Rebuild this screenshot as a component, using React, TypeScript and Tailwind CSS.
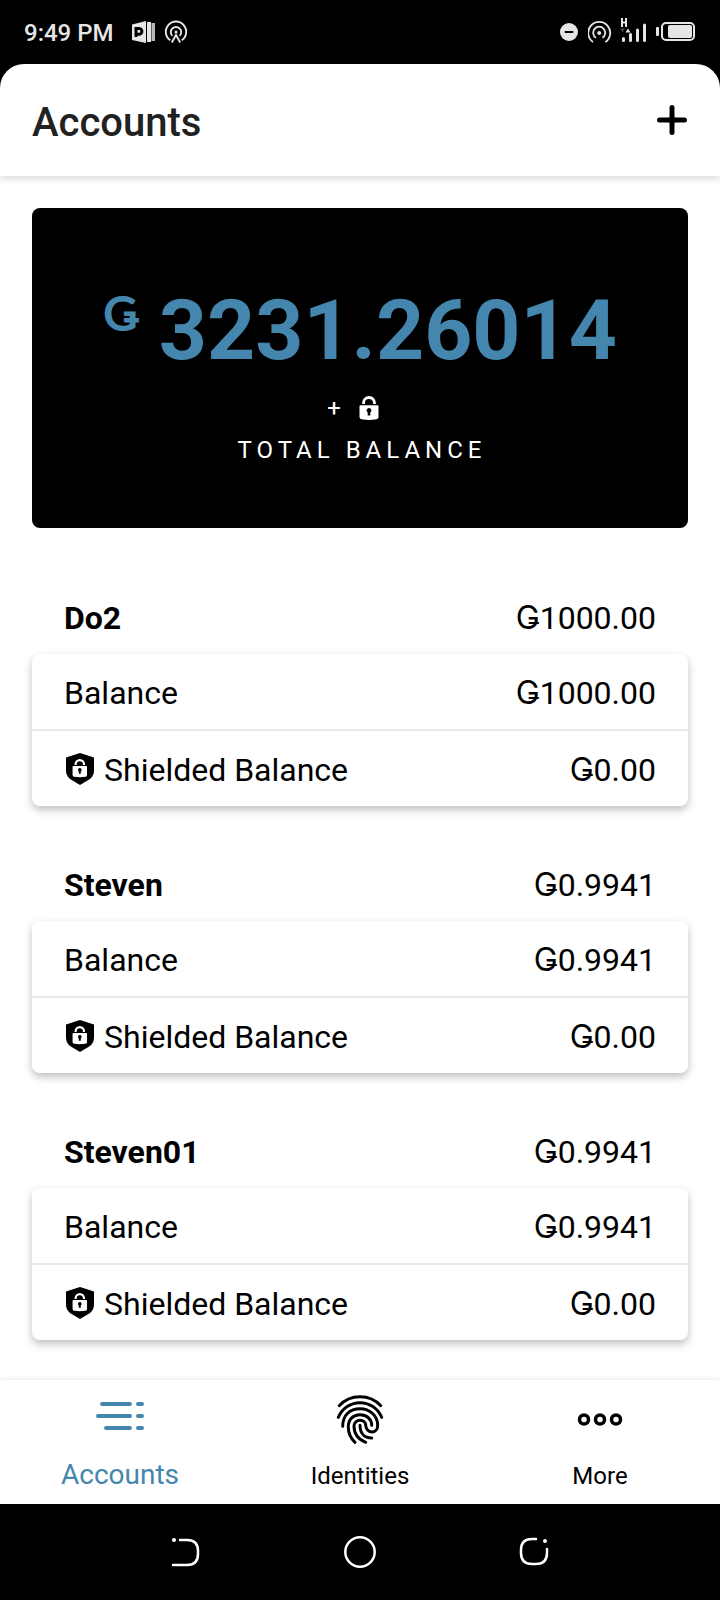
import React from "react";

type Account = { name: string; total: string; balance: string; shielded: string };

const accounts: Account[] = [
  { name: "Do2", total: "Ǥ1000.00", balance: "Ǥ1000.00", shielded: "Ǥ0.00" },
  { name: "Steven", total: "Ǥ0.9941", balance: "Ǥ0.9941", shielded: "Ǥ0.00" },
  { name: "Steven01", total: "Ǥ0.9941", balance: "Ǥ0.9941", shielded: "Ǥ0.00" },
];

function StatusBar() {
  return (
    <div className="flex h-16 items-center justify-between bg-black px-6 text-[#e6e6e6]">
      <div className="flex items-center gap-2">
        <span className="mr-2.5 pt-0.5 text-2xl font-medium">9:49 PM</span>
        <svg className="h-6 w-6" viewBox="0 0 24 24" fill="currentColor" aria-hidden="true">
          <path d="M0 4.500L14 1v22L0 20z" />
          <path d="M15 2h4v20h-4z" />
          <path d="M19.500 3h3.500v18h-3.500z" opacity=".8" />
          <path d="M4 17V8.500h3a2.900 2.900 0 0 1 0 5.800H4" fill="none" stroke="black" strokeWidth="3" />
        </svg>
        <svg className="h-6 w-6" viewBox="0 0 24 24" fill="none" stroke="currentColor" strokeWidth="1.900" aria-hidden="true">
          <path d="M6.300 20.200a10.200 10.200 0 1 1 11.400 0M8.300 15.800a5.200 5.200 0 1 1 7.400 0M7.800 22.500l4.200-7.500 4.200 7.500" />
          <circle cx="12" cy="12" r="1.500" fill="currentColor" stroke="none" />
        </svg>
      </div>
      <div className="flex items-center gap-2">
        <svg className="h-5 w-5" viewBox="0 0 20 20" aria-hidden="true">
          <circle cx="9" cy="10" r="9" fill="currentColor" />
          <path d="M5.500 10h7" stroke="black" strokeWidth="2" strokeLinecap="round" />
        </svg>
        <svg className="h-6 w-6" viewBox="0 0 24 24" fill="none" stroke="currentColor" strokeWidth="1.800" aria-hidden="true">
          <path d="M5 22a11 11 0 1 1 12.400 0M8 17.800a6 6 0 1 1 6.400 0" />
          <circle cx="11.200" cy="13" r="2" fill="currentColor" stroke="none" />
        </svg>
        <svg className="h-7 w-7" viewBox="0 0 28 28" fill="none" stroke="currentColor" aria-hidden="true">
          <path d="M2 0v9M6 0v9M2 4.500h4" strokeWidth="2" />
          <path d="M0 10.500h5l-2.500 4z" fill="#444" stroke="none" />
          <path d="M5.500 14.500h5L8 10.500z" fill="currentColor" stroke="none" />
          <path d="M3.500 20.500v2M10.500 16.500v6M17.500 12v10.500M24.500 7v15.500" strokeWidth="3" strokeLinecap="round" />
        </svg>
        <svg className="h-5 w-10" viewBox="0 0 40 20" aria-hidden="true">
          <rect x="0" y="5" width="3" height="9" rx="1" fill="currentColor" />
          <rect x="6" y="1" width="32" height="17" rx="4" fill="none" stroke="currentColor" strokeWidth="2" />
          <rect x="12" y="3" width="24" height="13" rx="2" fill="currentColor" />
        </svg>
      </div>
    </div>
  );
}

function LockShape() {
  return (
    <>
      <path d="M4.500 8V7a5.500 5.500 0 0 1 11 0V8" fill="none" stroke="currentColor" strokeWidth="2.800" />
      <path
        fillRule="evenodd"
        d="M1.500 9.300h17q1 0 1 1V21q0 2-2 2.300-7.500 1.200-15 0-2-.3-2-2.300V10.300q0-1 1-1zM10 12a2.400 2.400 0 0 0-1.300 4.400V19.500h2.600v-3.100A2.400 2.400 0 0 0 10 12z"
        fill="currentColor"
      />
    </>
  );
}

function ShieldIcon() {
  return (
    <svg className="h-8 w-8 shrink-0" viewBox="0 0 32 32" aria-hidden="true">
      <path d="M16 0l14 4.500V17q0 6-4 9L16 32 6 26q-4-3-4-9V4.500z" fill="black" />
      <g className="text-white" transform="translate(8.200 6) scale(.76)">
        <LockShape />
      </g>
    </svg>
  );
}

function AccountCard({ account }: { account: Account }) {
  return (
    <section>
      <div className="flex h-[75px] items-center justify-between px-8 pt-0.5">
        <h2 className="font-bold">{account.name}</h2>
        <span>{account.total}</span>
      </div>
      <div className="rounded-lg bg-white shadow-[0_4px_8px_rgba(0,0,0,0.25)]">
        <div className="flex h-[77px] items-center justify-between border-b-2 border-[#e8e8e8] px-8">
          <span className="pt-0.5">Balance</span>
          <span className="pt-0.5">{account.balance}</span>
        </div>
        <div className="flex h-[75px] items-center justify-between px-8">
          <span className="flex items-center gap-2">
            <ShieldIcon />
            <span className="pt-0.5">Shielded Balance</span>
          </span>
          <span className="pt-0.5">{account.shielded}</span>
        </div>
      </div>
    </section>
  );
}

function AccountsIcon() {
  return (
    <svg className="h-12 w-12" viewBox="0 0 48 48" fill="none" stroke="currentColor" strokeWidth="4" strokeLinecap="round" aria-hidden="true">
      <path d="M6 8h28M2 20h32M10 32h24M42 8h4M42 20h4M42 32h4" />
    </svg>
  );
}

function FingerprintIcon() {
  return (
    <svg className="h-12 w-12 overflow-visible" viewBox="0 0 48 48" fill="none" stroke="currentColor" strokeWidth="3" strokeLinecap="round" aria-hidden="true">
      <path d="M3.300 9.700C14-2.300 34-2.300 44.700 9.700" />
      <path d="M2.300 21.300C11 1.800 37 1.800 45.700 21.300" />
      <path d="M6.700 30.300C6.700 19 14 12.700 24 12.700S41.700 20 41.700 29.300C41.700 33.500 39 36 35.700 36S29.700 33 29.700 29.300C29.700 26 27 24.300 24 24.300S18 26.500 18 30C18 38 22.500 43.500 29.700 46.300" />
      <path d="M19 46.300C14.500 42 12.300 37 12.300 31C12.300 23 17.500 18.700 24 18.700S35.700 23 35.700 29.300" />
      <path d="M24 29.300C24 37 28 42 35.700 42" />
    </svg>
  );
}

function MoreIcon() {
  return (
    <svg className="h-12 w-12" viewBox="0 0 48 48" fill="none" stroke="currentColor" strokeWidth="3.500" aria-hidden="true">
      <circle cx="8" cy="23.500" r="4.500" />
      <circle cx="24" cy="23.500" r="4.500" />
      <circle cx="40" cy="23.500" r="4.500" />
    </svg>
  );
}

export default function App() {
  return (
    <div className="flex min-h-screen flex-col bg-black font-['Roboto','Inter',sans-serif] text-black">
      <StatusBar />
      <div className="flex grow flex-col overflow-hidden rounded-t-3xl bg-white">
        <header className="flex h-28 items-center justify-between px-8 shadow-[0_2px_8px_rgba(0,0,0,0.18)]">
          <h1 className="pt-1.5 text-[40px] font-medium text-[#212121]">Accounts</h1>
          <button type="button" aria-label="Add account">
            <svg className="h-8 w-8" viewBox="0 0 32 32" stroke="currentColor" strokeWidth="5" strokeLinecap="round" aria-hidden="true">
              <path d="M16 3.500v25M3.500 16h25" />
            </svg>
          </button>
        </header>
        <main className="grow px-8 pt-8 text-[32px] leading-10">
          <section className="flex h-80 flex-col items-center rounded-lg bg-black pt-[81px] text-white">
            <div className="flex items-start gap-5 font-bold text-[#4486ae]">
              <span className="font-['Lato',sans-serif] text-5xl leading-12">Ǥ</span>
              <span className="text-[84px] leading-[84px]">3231.26014</span>
            </div>
            <div className="flex h-[61px] items-center gap-[18px] pt-2 pr-3.5 text-2xl">
              <span>+</span>
              <svg className="h-6 w-5" viewBox="0 0 20 24" aria-hidden="true">
                <LockShape />
              </svg>
            </div>
            <p className="pl-1 text-2xl tracking-[5px]">TOTAL BALANCE</p>
          </section>
          <div className="flex flex-col gap-10 pt-[51px] pb-8">
            {accounts.map((account) => (
              <AccountCard key={account.name} account={account} />
            ))}
          </div>
        </main>
        <nav className="grid h-[124px] grid-cols-3 text-2xl shadow-[0_0_6px_rgba(0,0,0,0.12)]">
          <a href="#accounts" className="flex flex-col items-center gap-[15px] pt-4 text-[28px] leading-8 text-[#4486ae]">
            <AccountsIcon />
            Accounts
          </a>
          <a href="#identities" className="flex flex-col items-center gap-4 pt-4 leading-8">
            <FingerprintIcon />
            Identities
          </a>
          <a href="#more" className="flex flex-col items-center gap-4 pt-4 leading-8">
            <MoreIcon />
            More
          </a>
        </nav>
      </div>
      <div className="flex h-24 items-center justify-center gap-[142px] text-white">
        <button type="button" aria-label="Back">
          <svg className="h-8 w-8" viewBox="0 0 32 32" fill="none" stroke="currentColor" strokeWidth="2.500" strokeLinecap="round" aria-hidden="true">
            <path d="M10 4h7q11 0 11 11v3q0 11-11 11H3" />
            <circle cx="4" cy="4" r="2" fill="currentColor" stroke="none" />
          </svg>
        </button>
        <button type="button" aria-label="Home">
          <svg className="h-8 w-8" viewBox="0 0 32 32" fill="none" stroke="currentColor" strokeWidth="2.500" aria-hidden="true">
            <circle cx="16" cy="16" r="14.700" />
          </svg>
        </button>
        <button type="button" aria-label="Recent apps">
          <svg className="h-8 w-8" viewBox="0 0 32 32" fill="none" stroke="currentColor" strokeWidth="2.500" strokeLinecap="round" aria-hidden="true">
            <path d="M18 3h-4Q3 3 3 14v3q0 11 11 11h4q11 0 11-11v-4" />
            <circle cx="27" cy="5" r="2" fill="currentColor" stroke="none" />
          </svg>
        </button>
      </div>
    </div>
  );
}
